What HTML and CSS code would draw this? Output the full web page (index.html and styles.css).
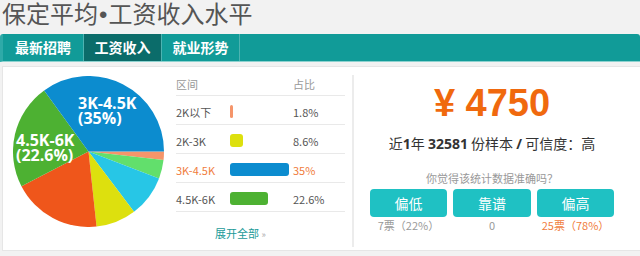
FILE: index.html
```html
<!DOCTYPE html>
<html lang="zh-CN">
<head>
<meta charset="utf-8">
<title>保定平均工资收入水平</title>
<link rel="stylesheet" href="styles.css">
</head>
<body>
<h1 class="title">保定平均<span class="dot">•</span>工资收入水平</h1>
<nav class="tabs">
  <a class="tab">最新招聘</a>
  <a class="tab active">工资收入</a>
  <a class="tab">就业形势</a>
</nav>
<section class="panel">
  <div class="pie">
    <svg width="151" height="151" viewBox="0 0 151 151">
      <path d="M75.5 75.5 L151 75.5 A75.5 75.5 0 0 1 150.52 84.02 Z" fill="#f5956a"/>
      <path d="M75.5 75.5 L150.52 84.02 A75.5 75.5 0 0 1 146.04 102.41 Z" fill="#62df6c"/>
      <path d="M75.5 75.5 L146.04 102.41 A75.5 75.5 0 0 1 121.02 135.73 Z" fill="#27c6e6"/>
      <path d="M75.5 75.5 L121.02 135.73 A75.5 75.5 0 0 1 83.55 150.57 Z" fill="#dde00e"/>
      <path d="M75.5 75.5 L83.55 150.57 A75.5 75.5 0 0 1 8.44 110.2 Z" fill="#ef561b"/>
      <path d="M75.5 75.5 L8.44 110.2 A75.5 75.5 0 0 1 31.12 14.42 Z" fill="#4db132"/>
      <path d="M75.5 75.5 L31.12 14.42 A75.5 75.5 0 0 1 151 75.5 Z" fill="#0c8ccf"/>
      <text class="plabel" x="65" y="33">3K-4.5K</text>
      <text class="plabel" x="65" y="47.5">(35%)</text>
      <text class="plabel" x="3" y="70">4.5K-6K</text>
      <text class="plabel" x="3" y="84.5">(22.6%)</text>
    </svg>
  </div>
  <div class="dist">
    <div class="row head"><span class="c-range">区间</span><span class="c-bar"></span><span class="c-pct">占比</span></div>
    <div class="row"><span class="c-range">2K以下</span><span class="c-bar"><i class="bar salmon" style="width:3px"></i></span><span class="c-pct">1.8%</span></div>
    <div class="row"><span class="c-range">2K-3K</span><span class="c-bar"><i class="bar yellow" style="width:13px"></i></span><span class="c-pct">8.6%</span></div>
    <div class="row hl"><span class="c-range">3K-4.5K</span><span class="c-bar"><i class="bar blue" style="width:59px"></i></span><span class="c-pct">35%</span></div>
    <div class="row"><span class="c-range">4.5K-6K</span><span class="c-bar"><i class="bar green" style="width:38px"></i></span><span class="c-pct">22.6%</span></div>
    <a class="more">展开全部 <span class="raquo">»</span></a>
  </div>
  <div class="summary">
    <div class="amount">¥ 4750</div>
    <div class="sample">近<b>1</b>年 <b>32581</b> 份样本 <b>/</b> 可信度：高</div>
    <div class="ask">你觉得该统计数据准确吗？</div>
    <div class="votes">
      <div class="vote"><button class="btn">偏低</button><span class="count">7票（22%）</span></div>
      <div class="vote"><button class="btn">靠谱</button><span class="count">0</span></div>
      <div class="vote"><button class="btn">偏高</button><span class="count orange">25票（78%）</span></div>
    </div>
  </div>
</section>
</body>
</html>
```
FILE: styles.css
```css
html, body {
  margin: 0;
  padding: 0;
}
body {
  width: 640px;
  height: 256px;
  overflow: hidden;
  background: #f2f2f2;
  font-family: "Noto Sans CJK SC", sans-serif;
  color: #555;
}
.title {
  margin: 0;
  height: 34px;
  padding-left: 2px;
  font-size: 24px;
  line-height: 26px;
  font-weight: 400;
  color: #555;
  font-family: "Noto Sans CJK SC", sans-serif;
}
.title .dot {
  font-family: "Liberation Sans", sans-serif;
  padding: 0 1px;
}
.tabs {
  display: flex;
  height: 27px;
  background: #119b98;
  border-left: 3px solid #2eaaa8;
  border-bottom: 1px solid #8dd2cf;
  border-radius: 3px 3px 0 0;
}
.tab {
  width: 77px;
  text-align: center;
  color: #fff;
  font-size: 14px;
  font-weight: 700;
  line-height: 27px;
  border-right: 1px solid #4db3b1;
}
.tab:first-child {
  width: 80px;
  padding-left: 0;
}
.tab.active {
  background: #0b6c6a;
}
.panel {
  display: flex;
  margin: 4px 0 0 2px;
  width: 645px;
  height: 183px;
  background: #fff;
  border: 1px solid #e6e6e6;
}
.pie {
  margin: 9px 0 0 10px;
  width: 151px;
  height: 151px;
}
.pie svg {
  display: block;
}
.plabel {
  fill: #fff;
  font-family: "Open Sans", sans-serif;
  font-weight: 700;
  font-size: 16px;
}
.dist {
  margin: 6px 0 0 12px;
  width: 169px;
  display: flex;
  flex-direction: column;
}
.row {
  display: flex;
  align-items: center;
  height: 29px;
  box-sizing: border-box;
  padding-top: 3px;
  border-bottom: 1px solid #e9e9e9;
  font-size: 11px;
  color: #555;
}
.row.head {
  height: 23px;
  padding-top: 0;
  color: #999;
}
.row.hl {
  color: #f07c3c;
}
.c-range {
  width: 54px;
}
.c-bar {
  width: 63px;
  display: flex;
  align-items: center;
}
.c-pct {
  flex: 1;
}
.bar {
  display: block;
  height: 13px;
  border-radius: 3px;
}
.salmon { background: #f5956a; }
.yellow { background: #dde00e; }
.blue { background: #0c8ccf; }
.green { background: #4db132; }
.more {
  margin: 14px 0 0 39px;
  font-size: 11px;
  line-height: 14px;
  color: #1a9a98;
}
.raquo {
  color: #aaa;
  font-size: 9px;
}
.summary {
  margin: 8px 0 3px 7px;
  width: 276px;
  border-left: 2px solid #ececec;
  display: flex;
  flex-direction: column;
  align-items: center;
  padding-top: 8px;
}
.amount {
  font-family: "Liberation Sans", sans-serif;
  font-weight: 700;
  font-size: 38px;
  line-height: 40px;
  color: #f0690e;
}
.sample {
  margin-top: 10px;
  font-size: 14px;
  line-height: 20px;
  color: #333;
}
.sample b {
  font-family: "Open Sans", sans-serif;
  font-weight: 700;
}
.ask {
  margin-top: 16px;
  font-size: 11px;
  line-height: 16px;
  color: #999;
}
.votes {
  display: flex;
  gap: 6px;
  margin-top: 3px;
}
.vote {
  display: flex;
  flex-direction: column;
  align-items: center;
}
.btn {
  width: 77px;
  height: 28px;
  border: 0;
  border-radius: 4px;
  background: #1fc1c3;
  color: #fff;
  font-family: "Noto Sans CJK SC", sans-serif;
  font-size: 14px;
  padding: 0;
}
.vote:nth-child(2) .btn {
  width: 78px;
}
.count {
  font-size: 11px;
  line-height: 16px;
  color: #999;
}
.count.orange {
  color: #f07c3c;
}
```
